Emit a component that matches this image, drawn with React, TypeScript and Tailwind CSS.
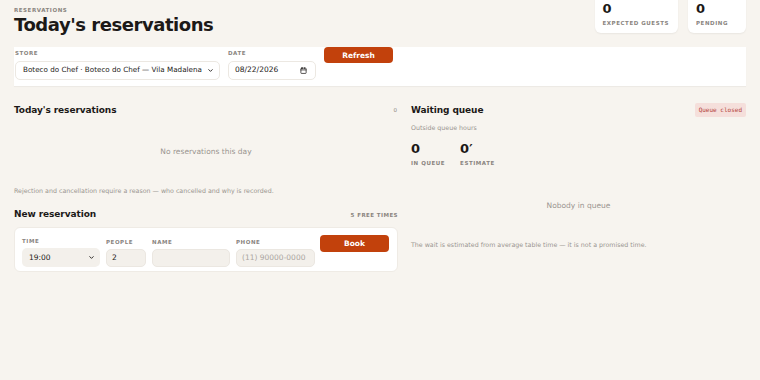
import { ChevronDown, Calendar } from 'lucide-react';

const label = 'block text-[5.5px] font-bold tracking-[0.1em] uppercase text-[#8a8580]';

function Stat({ value, caption, wide }: { value: string; caption: string; wide?: boolean }) {
  return (
    <div className={`bg-white rounded-md shadow-[0_1px_2px_rgba(0,0,0,0.06)] pl-[8px] pr-[9px] pt-[11px] pb-[6px] -mt-[9px] ${wide ? 'w-[58px]' : ''}`}>
      <div className="text-[13px] font-bold leading-none text-[#1c1917]">{value}</div>
      <div className="mt-[4px] text-[5.5px] font-bold tracking-[0.1em] text-[#8a8580]">{caption}</div>
    </div>
  );
}

export default function App() {
  return (
    <div className="w-[760px] h-[380px] overflow-hidden bg-[#f7f4ef] font-['DejaVu_Sans',sans-serif] text-[#1c1917]">
      <div className="px-[14px]">
        <div className="flex items-start justify-between">
          <div className="pt-[6px]">
            <div className="text-[5.5px] font-bold tracking-[0.1em] text-[#8a8580]">RESERVATIONS</div>
            <h1 className="text-[18px] font-bold leading-[22px] tracking-tight">Today's reservations</h1>
          </div>
          <div className="flex gap-[10px]">
            <Stat value="0" caption="EXPECTED GUESTS" />
            <Stat value="0" caption="PENDING" wide />
          </div>
        </div>

        <div className="mt-[11px] bg-white h-[39px] flex items-start gap-[8px] shadow-[0_1px_1px_rgba(0,0,0,0.04)]">
          <div className="pt-[1px] ml-[1px]">
            <span className={label + ' mt-[1px]'}>STORE</span>
            <div className="mt-[3px] w-[205px] h-[19px] rounded-[5px] border border-[#ece8e2] bg-white flex items-center justify-between pl-[7px] pr-[5px] text-[7.2px] whitespace-nowrap">
              <span>Boteco do Chef · Boteco do Chef — Vila Madalena</span>
              <ChevronDown className="w-[7px] h-[7px]" strokeWidth={3} />
            </div>
          </div>
          <div className="pt-[1px]">
            <span className={label + ' mt-[1px]'}>DATE</span>
            <div className="mt-[3px] w-[88px] h-[19px] rounded-[5px] border border-[#ece8e2] bg-white flex items-center justify-between pl-[6px] pr-[8px] text-[7.5px]">
              <span>08/22/2026</span>
              <Calendar className="w-[7px] h-[7px]" strokeWidth={2.5} />
            </div>
          </div>
          <button className="w-[69px] h-[16px] rounded-[4px] bg-[#c2410c] text-white text-[7.5px] font-bold">Refresh</button>
        </div>

        <div className="mt-[17px] grid grid-cols-[384px_335px] gap-[13px]">
          <div>
            <div className="flex items-center justify-between h-[14px]">
              <h2 className="text-[9px] font-bold tracking-[-0.01em]">Today's reservations</h2>
              <span className="text-[5.5px] text-[#8a8580] mr-[1px]">0</span>
            </div>
            <div className="h-[69px] flex items-center justify-center text-[7.5px] text-[#9a958f] pt-[1px] pb-[1px]">No reservations this day</div>
            <p className="text-[6.3px] text-[#9a958f]">Rejection and cancellation require a reason — who cancelled and why is recorded.</p>

            <div className="mt-[12px] flex items-center justify-between h-[14px]">
              <h2 className="text-[9px] font-bold tracking-[-0.01em]">New reservation</h2>
              <span className="text-[5.5px] font-bold tracking-[0.08em] text-[#8a8580]">5 FREE TIMES</span>
            </div>
            <div className="mt-[5px] bg-white rounded-md border border-[#efebe5] h-[45px] flex items-start gap-[6px] px-[7px] pt-[6px]">
              <div className="pt-[3px]">
                <span className={label}>TIME</span>
                <div className="mt-[3px] w-[78px] h-[19px] rounded-[5px] bg-[#f3f0eb] flex items-center justify-between pl-[7px] pr-[5px] text-[7.5px]">
                  <span>19:00</span>
                  <ChevronDown className="w-[7px] h-[7px]" strokeWidth={3} />
                </div>
              </div>
              <div className="pt-[4px]">
                <span className={label}>PEOPLE</span>
                <div className="mt-[3px] w-[40px] h-[18px] rounded-[5px] bg-[#f3f0eb] border border-[#ebe7e1] flex items-center px-[5px] text-[7.5px]">2</div>
              </div>
              <div className="pt-[4px]">
                <span className={label}>NAME</span>
                <div className="mt-[3px] w-[78px] h-[18px] rounded-[5px] bg-[#f3f0eb] border border-[#ebe7e1]" />
              </div>
              <div className="pt-[4px]">
                <span className={label}>PHONE</span>
                <div className="mt-[3px] w-[79px] h-[18px] rounded-[5px] bg-[#f3f0eb] border border-[#ebe7e1] flex items-center px-[5px] text-[7.5px] text-[#aaa59f] whitespace-nowrap">(11) 90000-0000</div>
              </div>
              <button className="ml-[-1px] mt-[1px] w-[69px] h-[17px] rounded-[4px] bg-[#c2410c] text-white text-[7.5px] font-bold">Book</button>
            </div>
          </div>

          <div>
            <div className="flex items-center justify-between h-[14px]">
              <h2 className="text-[9px] font-bold tracking-[-0.01em]">Waiting queue</h2>
              <span className="px-[4px] py-[3px] rounded-[2px] bg-[#f5dfdb] text-[6px] leading-[8px] text-[#b4423a] font-['DejaVu_Sans_Mono',monospace]">Queue closed</span>
            </div>
            <div className="mt-[6px] text-[6.3px] text-[#9a958f]">Outside queue hours</div>
            <div className="mt-[9px] flex gap-[15px]">
              <div>
                <div className="text-[13px] font-bold leading-none">0</div>
                <div className="mt-[4px] text-[5.5px] font-bold tracking-[0.1em] text-[#8a8580]">IN QUEUE</div>
              </div>
              <div>
                <div className="text-[13px] font-bold leading-none">0′</div>
                <div className="mt-[4px] text-[5.5px] font-bold tracking-[0.1em] text-[#8a8580]">ESTIMATE</div>
              </div>
            </div>
            <div className="h-[68px] flex items-center justify-center text-[7.5px] text-[#9a958f] pt-[10px]">Nobody in queue</div>
            <p className="mt-[5px] text-[6.3px] text-[#9a958f]">The wait is estimated from average table time — it is not a promised time.</p>
          </div>
        </div>
      </div>
    </div>
  );
}
